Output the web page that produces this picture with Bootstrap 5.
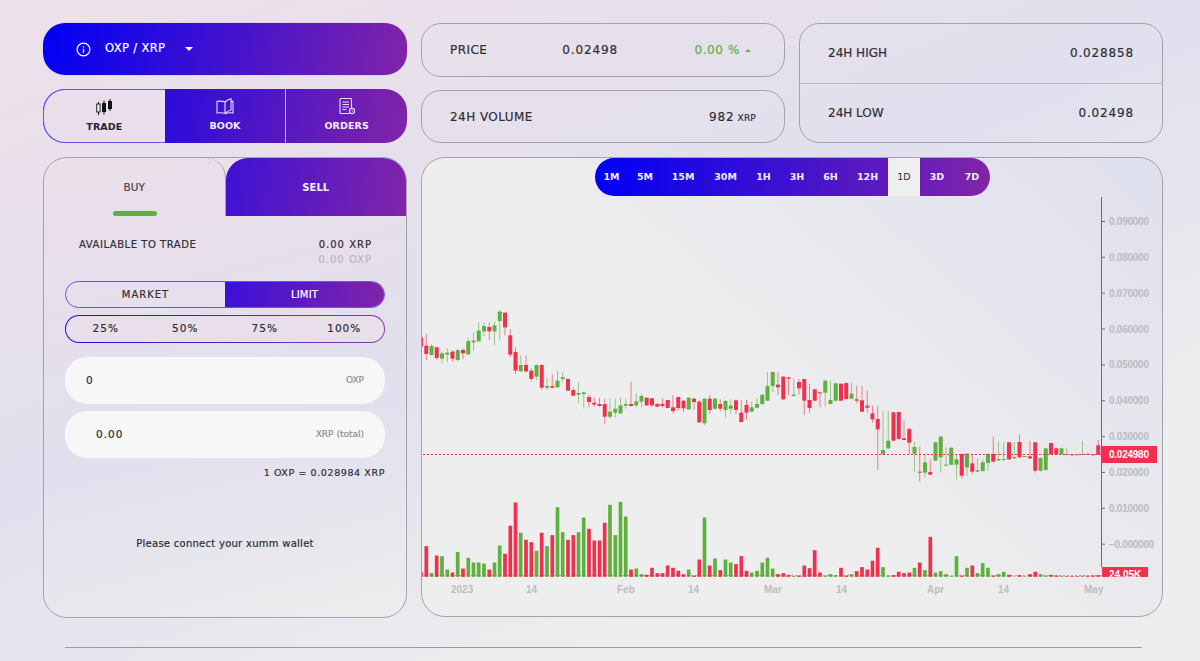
<!DOCTYPE html>
<html lang="en">
<head>
  <meta charset="UTF-8">
  <meta name="viewport" content="width=device-width, initial-scale=1.0">
  <title>OXP / XRP - Trade</title>
  <link href="https://cdn.jsdelivr.net/npm/bootstrap@5.3.2/dist/css/bootstrap.min.css" rel="stylesheet">
  <style>
    :root {
      --brand-grad: linear-gradient(100deg, #0000f5 0%, #8224a8 100%);
      --line-grey: #a3a3ad;
      --ink: #2f2f36;
    }
    html, body {
      height: 661px;
      overflow: hidden;
    }
    body {
      background: linear-gradient(158deg, #eee0e9 0%, #e1e0ee 45%, #eeeeee 80%);
      font-family: "DejaVu Sans", sans-serif;
      font-size: 11.5px;
      color: var(--ink);
      -webkit-text-stroke: .2px;
    }
    .dash-wrap {
      width: 1120px;
      margin-left: 43px;
      padding-top: 23px;
    }
    .dash-col {
      flex: 0 0 364px;
      width: 364px;
    }
    .dash-gap {
      gap: 14px;
    }
    .num-wide {
      letter-spacing: .85px;
    }
    .pair-select {
      height: 52px;
      border-radius: 22px;
      background: var(--brand-grad);
      color: #fff;
      padding-left: 33px;
      font-size: 11.5px;
      letter-spacing: .35px;
      box-shadow: 0 0 0 1px #ddd6e6;
    }
    .pair-select .pair-name {
      margin-left: 14px;
      width: 70px;
      white-space: nowrap;
    }
    .caret-down {
      width: 0;
      height: 0;
      margin-left: 10px;
      border: 4px solid transparent;
      border-top-color: #fff;
      border-bottom: 0;
    }
    .view-tabs {
      height: 54px;
      border-radius: 22px;
      background: var(--brand-grad);
      overflow: hidden;
      margin-top: 14px;
    }
    .view-tab {
      flex: 1 1 0;
      color: #f1ecfb;
      font-size: 9.5px;
      font-weight: 700;
      padding-top: 9px;
      letter-spacing: .1px;
      -webkit-text-stroke: 0;
    }
    .view-tab svg {
      display: block;
      height: 17px;
      margin-bottom: 4px;
    }
    .view-tab.is-active {
      background: #e9deea;
      color: #24243c;
      border: 1px solid #5b5bf0;
      border-right: 0;
      border-radius: 22px 0 0 22px;
    }
    .view-tab + .view-tab + .view-tab {
      border-left: 1px solid #c9b7ea;
    }
    .stat-box {
      border: 1px solid var(--line-grey);
      border-radius: 20px;
      padding: 0 28px;
      font-size: 12px;
    }
    .stat-label {
      letter-spacing: .45px;
    }
    .stat-price {
      height: 54px;
    }
    .stat-volume {
      height: 53px;
      margin-top: 13px;
    }
    .stat-value-a {
      margin-left: 75px;
    }
    .stat-change {
      margin-left: auto;
      margin-right: 5px;
      color: #5fb13f;
      letter-spacing: .6px;
    }
    .caret-up {
      display: inline-block;
      width: 0;
      height: 0;
      margin-left: 5px;
      margin-bottom: 2px;
      border: 3.5px solid transparent;
      border-bottom-color: #5fb13f;
      border-top: 0;
    }
    .unit-small {
      font-size: 9px;
      margin-left: 3px;
      letter-spacing: .2px;
    }
    .stat-range {
      height: 120px;
      border: 1px solid var(--line-grey);
      border-radius: 20px;
      font-size: 12px;
    }
    .stat-range > div {
      flex: 1 1 0;
      padding: 0 28px;
    }
    .stat-range > div + div {
      border-top: 1px solid #b9b9c4;
    }
    .main-row {
      margin-top: 14px;
    }
    .order-panel {
      height: 461px;
      border: 1px solid var(--line-grey);
      border-radius: 24px;
      background: linear-gradient(166deg, #eadfe9 0%, #e7dfeb 25%, #e1e0ee 60%, #ededed 100%);
      overflow: hidden;
    }
    .side-tabs {
      height: 58px;
    }
    .side-tab {
      flex: 1 1 0;
      font-size: 10.5px;
      padding-top: 22px;
      text-align: center;
    }
    .side-buy {
      color: #46464e;
      position: relative;
      border-right: 1px solid var(--line-grey);
      border-top-right-radius: 20px;
    }
    .side-buy::after {
      content: "";
      position: absolute;
      left: 69px;
      bottom: 0;
      width: 44px;
      height: 5px;
      border-radius: 3px;
      background: #5fb13f;
    }
    .side-sell {
      background: linear-gradient(100deg, #3f12d4 0%, #8224a8 100%);
      border-radius: 22px 0 0 0;
      color: #f4effb;
      font-size: 10px;
      font-weight: 700;
      -webkit-text-stroke: 0;
    }
    .order-body {
      padding: 21px 21px 0;
    }
    .avail-row {
      padding: 0 14px;
      font-size: 10px;
      line-height: 15px;
    }
    .avail-label {
      letter-spacing: .55px;
    }
    .avail-value {
      letter-spacing: 1px;
      margin-right: -1px;
    }
    .avail-muted {
      color: #b7b7bd;
    }
    .order-switch {
      height: 27px;
      margin-top: 14px;
      border: 1px solid #5b5bf0;
      border-radius: 14px;
      overflow: hidden;
      font-size: 10px;
      letter-spacing: 1px;
    }
    .order-switch > div {
      flex: 1 1 0;
      text-align: center;
      line-height: 25px;
    }
    .switch-on {
      background: linear-gradient(100deg, #3a10d8 0%, #8224a8 100%);
      color: #fff;
      letter-spacing: .2px;
    }
    .pct-row {
      height: 28px;
      margin-top: 7px;
      border: 1.5px solid transparent;
      border-radius: 14px;
      background:
        linear-gradient(#e8dfeb, #e8dfeb) padding-box,
        linear-gradient(100deg, #1010e8 0%, #8a3ab0 100%) border-box;
      font-size: 10.5px;
      letter-spacing: 1px;
    }
    .pct-row span {
      flex: 1 1 0;
      text-align: center;
    }
    .amount-field {
      height: 47px;
      margin-top: 7px;
      background: #f7f7f7;
      border-radius: 22px;
      padding: 0 21px;
      font-size: 10.5px;
    }
    .amount-value {
      margin-left: 10px;
      letter-spacing: 1px;
    }
    .amount-unit {
      font-size: 9px;
      color: #8e8e93;
    }
    .pct-row + .amount-field {
      margin-top: 14px;
    }
    .rate-line {
      margin-top: 8px;
      text-align: right;
      font-size: 9.5px;
      letter-spacing: .6px;
    }
    .wallet-note {
      margin-top: 56px;
      text-align: center;
      font-size: 10px;
      letter-spacing: .27px;
    }
    .chart-panel {
      flex: 0 0 742px;
      height: 460px;
      border: 1px solid var(--line-grey);
      border-radius: 24px;
      background: linear-gradient(222deg, #dfe0ee 0%, #e6e6ee 25%, #eeeeee 58%);
      position: relative;
      overflow: hidden;
      -webkit-text-stroke: 0;
    }
    .chart-panel svg {
      display: block;
    }
    .frame-bar {
      position: absolute;
      top: 0;
      left: 173px;
      width: 395px;
      height: 38px;
      border-radius: 19px;
      background: linear-gradient(90deg, #0000f5 0%, #8224a8 100%);
      color: #f1ecfb;
      font-size: 9.5px;
      font-weight: 700;
      overflow: hidden;
    }
    .frame-bar span {
      text-align: center;
      line-height: 38px;
    }
    .frame-bar .frame-on {
      background: #efefef;
      color: #33333a;
      font-weight: 400;
    }
    .axis-text {
      font-family: "Liberation Sans", sans-serif;
      font-weight: 700;
      font-size: 10px;
      fill: #bcbcc0;
    }
    .footer-rule {
      width: 1077px;
      margin: 29px 0 0 22px;
      border-top: 1px solid #9a9a9f;
    }
  </style>
</head>
<body>
  <div class="dash-wrap">
    <!-- Top stats -->
    <div class="d-flex dash-gap">
      <div class="dash-col">
        <div class="pair-select d-flex align-items-center">
          <svg width="15" height="15" viewBox="0 0 16 16" fill="none" stroke="#fff" stroke-width="1.3">
            <circle cx="8" cy="8" r="6.8"/>
            <path d="M8 7.2v4.2M8 4.4v1.4"/>
          </svg>
          <span class="pair-name">OXP / XRP</span>
          <span class="caret-down"></span>
        </div>
        <div class="view-tabs d-flex">
          <div class="view-tab is-active d-flex flex-column align-items-center">
            <svg width="18" height="17" viewBox="0 0 18 17">
              <path d="M3.5 3v13M9 1.5v14M15 0v12" stroke="#111" stroke-width="1" fill="none"/>
              <rect x="1.7" y="5" width="3.4" height="8" fill="#eee" stroke="#111" stroke-width=".9"/>
              <rect x="7" y="4" width="4" height="9" fill="#111"/>
              <rect x="13" y="2" width="4" height="8" fill="#111"/>
            </svg>
            TRADE
          </div>
          <div class="view-tab d-flex flex-column align-items-center">
            <svg width="18" height="17" viewBox="0 0 18 17" fill="none" stroke="#e4dcfa" stroke-width="1.1">
              <path d="M9 4C7.5 3 4 3 1 3.4V15c3-.4 6.3-.3 8 .6V4Z"/>
              <path d="M9 4c1.4-1.3 4-2.7 6-3.2V12c-2.3.5-4.6 1.8-6 3.6"/>
              <path d="M15 3.4h2V15c-3-.4-6.3-.3-8 .6"/>
            </svg>
            BOOK
          </div>
          <div class="view-tab d-flex flex-column align-items-center">
            <svg width="18" height="17" viewBox="0 0 18 17" fill="none" stroke="#e4dcfa" stroke-width="1.1">
              <path d="M11.5 15.5H3a1 1 0 0 1-1-1v-13a1 1 0 0 1 1-1h9.5a1 1 0 0 1 1 1V10"/>
              <path d="M4.5 4h6.5M4.5 6.5h6.5M4.5 9h6.5M4.5 11.5h4" stroke-width="1.2"/>
              <circle cx="14" cy="13" r="2.6"/>
              <path d="M14 12v1.2h1" stroke-width=".7"/>
            </svg>
            ORDERS
          </div>
        </div>
      </div>

      <div class="dash-col">
        <div class="stat-box stat-price d-flex align-items-center">
          <span class="stat-label">PRICE</span>
          <span class="stat-value-a num-wide">0.02498</span>
          <span class="stat-change">0.00 %<i class="caret-up"></i></span>
        </div>
        <div class="stat-box stat-volume d-flex align-items-center justify-content-between">
          <span class="stat-label">24H VOLUME</span>
          <span><span class="num-wide">982</span><span class="unit-small">XRP</span></span>
        </div>
      </div>

      <div class="dash-col">
        <div class="stat-range d-flex flex-column">
          <div class="d-flex align-items-center justify-content-between"><span>24H HIGH</span><span class="num-wide">0.028858</span></div>
          <div class="d-flex align-items-center justify-content-between"><span>24H LOW</span><span class="num-wide">0.02498</span></div>
        </div>
      </div>
    </div>

    <!-- Order form and chart -->
    <div class="main-row d-flex dash-gap">
      <div class="dash-col">
        <div class="order-panel">
          <div class="side-tabs d-flex">
            <div class="side-tab side-buy">BUY</div>
            <div class="side-tab side-sell">SELL</div>
          </div>
          <div class="order-body">
            <div class="avail-row">
              <div class="d-flex justify-content-between"><span class="avail-label">AVAILABLE TO TRADE</span><span class="avail-value">0.00 XRP</span></div>
              <div class="text-end avail-muted avail-value">0.00 OXP</div>
            </div>
            <div class="order-switch d-flex">
              <div>MARKET</div>
              <div class="switch-on">LIMIT</div>
            </div>
            <div class="pct-row d-flex align-items-center">
              <span>25%</span><span>50%</span><span>75%</span><span>100%</span>
            </div>
            <div class="amount-field d-flex align-items-center justify-content-between">
              <span>0</span><span class="amount-unit">OXP</span>
            </div>
            <div class="amount-field d-flex align-items-center justify-content-between">
              <span class="amount-value">0.00</span><span class="amount-unit">XRP (total)</span>
            </div>
            <div class="rate-line">1 OXP = 0.028984 XRP</div>
            <div class="wallet-note">Please connect your xumm wallet</div>
          </div>
        </div>
      </div>

      <div class="chart-panel">
        <svg id="chart" width="740" height="458" viewBox="422 158 740 458"></svg>
        <div class="frame-bar d-flex">
          <span style="width:33px">1M</span>
          <span style="width:34px">5M</span>
          <span style="width:42px">15M</span>
          <span style="width:43px">30M</span>
          <span style="width:33px">1H</span>
          <span style="width:34px">3H</span>
          <span style="width:33px">6H</span>
          <span style="width:41px">12H</span>
          <span class="frame-on" style="width:32px">1D</span>
          <span style="width:34px">3D</span>
          <span style="width:36px">7D</span>
        </div>
      </div>
    </div>

    <div class="footer-rule"></div>
  </div>

  <script src="https://cdn.jsdelivr.net/npm/bootstrap@5.3.2/dist/js/bootstrap.bundle.min.js"></script>
  <script>
    // candles: colour, body top, body bottom, wick top, wick bottom (read off 3x crops)
    const seg1 = 'r112,140,112,140 r137,162,102,180 g138,165,133,167 r142,174,140,180 g160,176,155,190 g158,164,145,188 r155,176,152,185 g150,180,148,186 r150,160,145,178 g123,163,113,165 g122,127,97,152 g92,124,67,125 g78,94,67,108 r81,94,67,120 g76,94,64,135 g35,63,30,122 r38,82,38,106 r106,164,88,172 r156,212,142,222 g195,214,166,216 r195,214,166,218 r212,237,205,245 g195,230,193,240 r195,263,193,270 g258,263,232,270 r258,263,222,265 g242,262,213,264 g232,237,215,245 r237,272,235,273 r270,287,262,288 g279,284,246,310 g277,282,275,325 r291,306,284,322 r308,314,292,320 r312,318,293,320 r312,350,296,372 g335,350,295,356 g326,338,295,352 g316,340,293,342 g312,317,295,325 r312,318,245,320 g304,316,280,322 g288,305,280,322 r293,316,293,318 r295,316,295,320 r312,320,310,322 r312,318,295,322 r300,324,300,325 r322,333,285,340 r291,324,290,332 r302,325,300,335 g293,328,292,330 r296,306,295,330 r305,367,300,368 g296,370,295,375 r296,330,284,342 g296,326,295,330 r312,326,298,334 g303,330,300,352 g317,326,298,342 r301,330,298,342 r338,366,300,368 r315,338,300,358 g322,335,305,338 g312,323,295,325 g284,312,283,316 g258,302,215,303 g216,258,215,275 r254,262,217,285 r230,298,228,300 r232,236,230,285';
    const seg2 = 'g104,108,55,110 r66,85,57,104 r57,122,57,164 r120,144,72,158 r88,122,86,124 r97,100,97,142 g62,98,60,140 g120,132,62,133 g70,122,68,124 r71,122,70,124 r69,117,67,120 g101,116,68,118 r118,122,78,130 r121,155,78,156 r137,143,92,158 r160,178,137,188 r177,208,137,330 g270,283,153,285 g242,265,152,267 r157,242,155,244 r156,237,155,240 r235,240,183,240 r207,248,203,282 g261,281,247,335 r335,338,260,365 g307,338,283,352 r336,344,298,345 g247,302,245,304 g230,292,228,337 g314,317,262,318 g263,314,262,316 g298,314,283,358 r282,347,281,355 g281,322,280,348 r310,335,282,342 g331,335,296,336 g307,333,297,335 g282,309,280,332 r282,305,230,307 g297,301,243,303 g297,300,247,302 r247,298,246,299 g291,295,246,297 r246,292,224,294 g288,290,288,291 r289,295,243,297 r247,332,246,338 g294,332,293,334 g265,330,264,332 r249,283,248,285 r265,283,263,285 g265,283,264,285 g282,284,264,285 r283,284,283,284 g283,284,283,284 g282,284,243,285 r281,283,281,283 r283,284,283,284 r256,284,240,285';
    // volume: colour + top of bar in crop units
    const vol1 = 'r276 r198 g279 r226 g228 g268 r277 g216 r265 g233 g247 g247 g250 r268 g247 g196 r221 r137 r67 g158 r179 r186 g212 r158 g198 r165 g81 g156 r179 r165 g156 g112 r146 r181 r181 r128 g74 g165 g65 g109 r268 g265 g282 r284 r263 r279 r279 r256 r263 r272 r282 g268 r286 r238 g112 r256 g235 r270 g238 g247 r252 r228 r272 g277 g272 g247 g233 g265 r282 r279 r284';
    const vol2 = 'g227 r226 r196 r204 r150 r217 g226 g222 g225 r203 r226 g222 r213 r201 r208 r182 r143 g201 g226 r225 r215 r219 r217 g203 r187 g210 r110 g217 g213 g222 g228 g168 r226 g203 r196 g219 g189 g203 r226 g222 g215 r224 g229 r225 g228 r222 r215 g222 g226 r224 r226 g227 r228 r228 r228 g226 r227 r226 r225';

    const RED = '#f0304f', GREEN = '#5fb13f', STEP = 5.25, X0 = 421;
    const parts = [];
    const toY1 = v => 300 + v / 3, toY2 = v => 360 + v / 3;

    function addCandles(list, toY, first) {
      list.split(' ').forEach(function(item, i) {
        const color = item[0] === 'r' ? RED : GREEN;
        const [bt, bb, wt, wb] = item.slice(1).split(',').map(Number);
        const x = X0 + (first + i) * STEP;
        parts.push(`<line x1="${x}" x2="${x}" y1="${toY(wt)}" y2="${toY(wb)}" stroke="${color}" stroke-opacity=".6"/>`);
        parts.push(`<rect x="${x - 2}" y="${toY(bt)}" width="4" height="${Math.max(toY(bb) - toY(bt), 1)}" fill="${color}"/>`);
      });
    }

    function addVolume(list, zeroY, first) {
      list.split(' ').forEach(function(item, i) {
        const color = item[0] === 'r' ? RED : GREEN;
        const top = zeroY + Number(item.slice(1)) / 3;
        const x = X0 + (first + i) * STEP;
        parts.push(`<rect x="${x - 2}" y="${top}" width="4" height="${577 - top}" fill="${color}" stroke="#fff" stroke-opacity=".5" stroke-width=".5"/>`);
      });
    }

    addCandles(seg1, toY1, 0);
    addCandles(seg2, toY2, 71);
    addVolume(vol1, 480, 0);
    addVolume(vol2, 500, 71);

    // last price + volume lines
    parts.push(`<line x1="423" x2="1101" y1="454.5" y2="454.5" stroke="${RED}" stroke-dasharray="2 2"/>`);
    parts.push(`<line x1="423" x2="1101" y1="575.5" y2="575.5" stroke="${RED}" stroke-opacity=".5" stroke-dasharray="2 2"/>`);

    // price axis
    parts.push('<line x1="1101.5" x2="1101.5" y1="197" y2="567" stroke="#6a6a72"/>');
    const prices = ['0.090000', '0.080000', '0.070000', '0.060000', '0.050000', '0.040000', '0.030000', '0.020000', '0.010000', '\u22120.000000'];
    prices.forEach(function(label, i) {
      const y = 221.5 + i * 35.85;
      parts.push(`<line x1="1101" x2="1105" y1="${y}" y2="${y}" stroke="#6a6a72"/>`);
      parts.push(`<text class="axis-text" x="1109" y="${y + 3.5}" textLength="${i === 9 ? 45 : 40}">${label}</text>`);
    });
    parts.push(`<rect x="1102" y="446" width="55" height="17" fill="${RED}"/>`);
    parts.push('<text class="axis-text" x="1109" y="458" textLength="40" style="fill:#fff">0.024980</text>');
    parts.push('<svg x="1102" y="567" width="46" height="10"><rect width="46" height="10" fill="#f0304f"/><text class="axis-text" x="7" y="10.5" style="fill:#fff">24.05K</text></svg>');

    // time axis
    [['2023', 451], ['14', 526], ['Feb', 617], ['14', 688], ['Mar', 764], ['14', 836], ['Apr', 927], ['14', 998], ['May', 1084]].forEach(function(t) {
      parts.push(`<text class="axis-text" x="${t[1]}" y="593">${t[0]}</text>`);
    });

    document.getElementById('chart').innerHTML = parts.join('');
  </script>
</body>
</html>
